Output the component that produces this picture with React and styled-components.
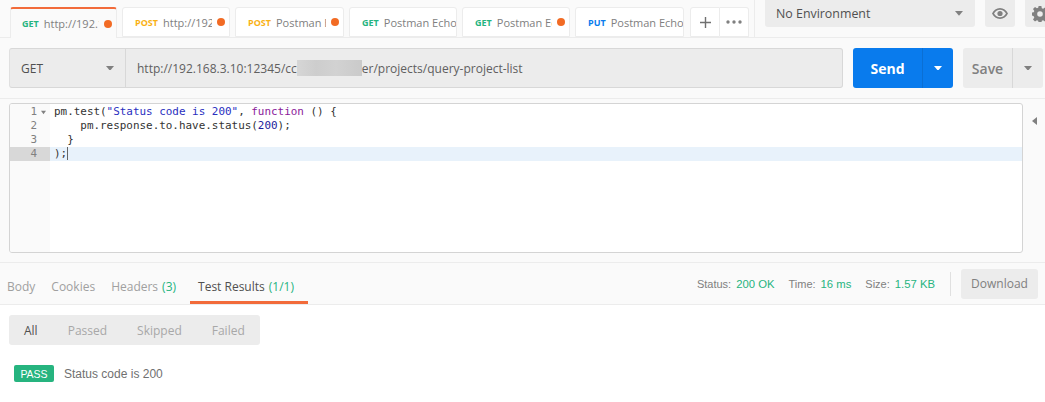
import styled, { createGlobalStyle } from "styled-components";

const Global = createGlobalStyle`
  html, body { margin: 0; padding: 0; background: #fff; }
  body { font-family: "Open Sans", sans-serif; color: #505050; overflow: hidden; }
`;

const Page = styled.div`
  width: 1045px;
  height: 402px;
  display: flex;
  flex-direction: column;
  overflow: hidden;
`;

const TopBar = styled.div`
  height: 37px;
  display: flex;
  background: #fafafa;
  border-bottom: 1px solid #ececec;
  flex: none;
`;

const TabList = styled.div`
  display: flex;
  align-items: flex-end;
  gap: 5px;
  padding-left: 10px;
  width: 755px;
  flex: none;
  box-sizing: border-box;
  border-right: 1px solid #ececec;
  height: 37px;
`;

const Tab = styled.div`
  width: ${({ $w }) => $w || 108}px;
  height: ${({ $active }) => ($active ? 31 : 30)}px;
  margin-bottom: ${({ $active }) => ($active ? -1 : 0)}px;
  box-sizing: border-box;
  background: ${({ $active }) => ($active ? "#fafafa" : "#fff")};
  border: 1px solid #ececec;
  border-top: ${({ $active }) => ($active ? "2px solid #f26b3a" : "1px solid #ececec")};
  border-bottom: ${({ $active }) => ($active ? "none" : "1px solid #ececec")};
  border-radius: 3px 3px 0 0;
  display: flex;
  align-items: center;
  padding: 0 ${({ $dot }) => ($dot ? 4 : 0)}px 0 ${({ $active }) => ($active ? 11 : 12)}px;
  font-size: 11px;
  white-space: nowrap;
  overflow: hidden;
`;

const Method = styled.span`
  font-size: 9px;
  font-weight: 700;
  color: ${({ $color }) => $color};
  margin-right: 5px;
  flex: none;
`;

const TabName = styled.span`
  color: #808080;
  font-size: 11px;
  overflow: hidden;
  flex: 1;
  min-width: 0;
`;

const Dot = styled.span`
  width: 8px;
  height: 8px;
  border-radius: 50%;
  background: #f26b24;
  flex: none;
  margin-left: 5px;
`;

const TabAction = styled.div`
  width: ${({ $w }) => $w}px;
  height: 30px;
  box-sizing: border-box;
  background: #fff;
  border: 1px solid #ececec;
  border-left: ${({ $joined }) => ($joined ? "none" : "1px solid #ececec")};
  border-radius: ${({ $joined }) => ($joined ? "0 3px 0 0" : "3px 0 0 0")};
  display: flex;
  align-items: center;
  justify-content: center;
  color: #808080;
  margin-left: ${({ $joined }) => ($joined ? -5 : 1)}px;
`;

const EnvArea = styled.div`
  display: flex;
  gap: 10px;
  padding-left: 10px;
  align-items: flex-start;
`;

const EnvSelect = styled.div`
  width: 210px;
  height: 27px;
  background: #ececec;
  border-radius: 0 0 3px 3px;
  display: flex;
  align-items: center;
  justify-content: space-between;
  padding: 0 12px 0 11px;
  box-sizing: border-box;
  font-size: 12.4px;
  color: #505050;
`;

const IconBox = styled.div`
  width: 30px;
  height: 27px;
  background: #ececec;
  border-radius: 0 0 3px 3px;
  display: flex;
  align-items: center;
  justify-content: center;
  color: #808080;
  overflow: hidden;
  flex: none;
`;

const UrlRow = styled.div`
  height: 61px;
  box-sizing: border-box;
  padding: 10px 2px 10px 9px;
  display: flex;
  background: #fafafa;
  border-bottom: 1px solid #ececec;
  flex: none;
`;

const UrlGroup = styled.div`
  width: 834px;
  height: 40px;
  box-sizing: border-box;
  display: flex;
  background: #ececec;
  border: 1px solid #d8d8d8;
  border-left-color: #e0e0e0;
  border-radius: 3px;
`;

const MethodSelect = styled.div`
  width: 116px;
  flex: none;
  box-sizing: border-box;
  border-right: 1px solid #d8d8d8;
  display: flex;
  align-items: center;
  justify-content: space-between;
  padding: 0 11px 0 11px;
  font-size: 12px;
  color: #505050;
`;

const UrlText = styled.div`
  display: flex;
  align-items: center;
  padding-left: 11px;
  font-size: 12px;
  color: #606060;
`;

const Smudge = styled.span`
  display: inline-block;
  width: 65px;
  height: 16px;
  background: linear-gradient(90deg, #d6d6d6, #cdcdcd 30%, #d2d2d2 60%, #cacaca);
`;

const SplitButton = styled.div`
  display: flex;
  height: 40px;
  width: ${({ $w }) => $w}px;
  margin-left: 10px;
  border-radius: 3px;
  overflow: hidden;
  flex: none;
  background: ${({ $primary }) => ($primary ? "#097bed" : "#ececec")};
  color: ${({ $primary }) => ($primary ? "#fff" : "#808080")};
  font-weight: ${({ $primary }) => ($primary ? 700 : 600)};
  font-size: 14px;
`;

const SplitMain = styled.div`
  width: ${({ $w }) => $w}px;
  flex: none;
  display: flex;
  align-items: center;
  justify-content: center;
  box-sizing: border-box;
`;

const SplitArrow = styled.div`
  flex: 1;
  display: flex;
  align-items: center;
  justify-content: center;
  border-left: 1px solid ${({ $line }) => $line};
`;

const EditorRow = styled.div`
  height: 164px;
  flex: none;
  display: flex;
  box-sizing: border-box;
  padding: 4px 0 0 9px;
  background: #fafafa;
  border-bottom: 1px solid #ececec;
`;

const Editor = styled.div`
  width: 1014px;
  height: 150px;
  box-sizing: border-box;
  background: #fff;
  border: 1px solid #d4d4d4;
  border-radius: 3px;
  display: flex;
  overflow: hidden;
  font-family: "DejaVu Sans Mono", monospace;
  font-size: 10.93px;
  line-height: 14px;
  flex: none;
`;

const Gutter = styled.div`
  width: 40px;
  flex: none;
  background: #fafafa;
  color: #808080;
  padding-top: 1px;
`;

const GutterLine = styled.div`
  height: 14px;
  display: flex;
  justify-content: flex-end;
  align-items: center;
  box-sizing: border-box;
  padding-right: ${({ $fold }) => ($fold ? 2 : 13)}px;
  background: ${({ $current }) => ($current ? "#d8d8d8" : "transparent")};
`;

const FoldMark = styled.svg`
  margin-left: 2px;
  flex: none;
`;

const Code = styled.div`
  flex: 1;
  padding-top: 1px;
  color: #333;
`;

const CodeLine = styled.div`
  height: 14px;
  padding-left: 4px;
  white-space: pre;
  background: ${({ $current }) => ($current ? "#e8f2fb" : "transparent")};
`;

const Str = styled.span`color: #2a2fc0;`;
const Kw = styled.span`color: #8a1a9a;`;
const Num = styled.span`color: #1c1c9c;`;

const Caret = styled.span`
  display: inline-block;
  width: 1px;
  height: 13px;
  background: #666;
  vertical-align: top;
`;

const SideToggle = styled.div`
  flex: 1;
  display: flex;
  justify-content: center;
  padding-top: 14px;
`;

const ResponseHeader = styled.div`
  height: 42px;
  flex: none;
  box-sizing: border-box;
  background: #fafafa;
  border-bottom: 1px solid #ececec;
  display: flex;
  align-items: stretch;
  justify-content: space-between;
  padding: 0 7px 0 7px;
`;

const ResponseTabs = styled.div`
  display: flex;
  gap: 16px;
  font-size: 12px;
`;

const ResponseTab = styled.div`
  color: ${({ $active }) => ($active ? "#505050" : "#a0a0a0")};
  display: flex;
  align-items: center;
  box-sizing: border-box;
  height: 41px;
  padding-top: 5px;
  ${({ $active }) => $active && `
    border-bottom: 3px solid #f26b3a;
    padding: 8px 8px 0 8px;
    margin-left: -2px;
    width: 118px;
  `}
`;

const Count = styled.span`
  color: #26b47f;
  margin-left: 4px;
`;

const Stats = styled.div`
  display: flex;
  align-items: center;
  font-family: "Liberation Sans", Arial, sans-serif;
  font-size: 11px;
  color: #808080;
`;

const Stat = styled.span`
  margin-right: ${({ $gap }) => $gap}px;
`;

const StatValue = styled.span`
  color: #26b47f;
  font-size: 11.3px;
  margin-left: 5px;
`;

const Divider = styled.div`
  width: 1px;
  height: 24px;
  background: #e0e0e0;
  margin: 0 10px 0 15px;
`;

const Download = styled.div`
  width: 77px;
  height: 30px;
  background: #ececec;
  border-radius: 3px;
  display: flex;
  align-items: center;
  justify-content: center;
  font-family: "Open Sans", sans-serif;
  font-size: 12px;
  color: #808080;
`;

const Results = styled.div`
  padding: 10px 0 0 9px;
`;

const Filters = styled.div`
  width: 251px;
  height: 30px;
  background: #ececec;
  border-radius: 3px;
  display: flex;
  align-items: center;
  font-size: 12px;
  padding-left: 15px;
  box-sizing: border-box;
  gap: 30px;
`;

const Filter = styled.span`
  color: ${({ $active }) => ($active ? "#505050" : "#a8a8a8")};
`;

const TestRow = styled.div`
  display: flex;
  align-items: center;
  margin: 20px 0 0 5px;
  gap: 10px;
  font-family: "Liberation Sans", Arial, sans-serif;
  font-size: 12px;
  color: #707070;
`;

const Badge = styled.span`
  width: 40px;
  height: 17px;
  background: #26b47f;
  color: #fff;
  border-radius: 2px;
  font-size: 10.5px;
  display: flex;
  align-items: center;
  justify-content: center;
`;

const Arrow = ({ color = "#808080", size = 8 }) => (
  <svg width={size} height={size * 0.6} viewBox="0 0 10 6">
    <path d="M0 0h10L5 6z" fill={color} />
  </svg>
);

const methodColors = { GET: "#26b47f", POST: "#f9b115", PUT: "#097bed" };

const tabs = [
  { method: "GET", name: "http://192.168.3.10", dot: true, active: true, w: 107 },
  { method: "POST", name: "http://192.168", dot: true },
  { method: "POST", name: "Postman Echo", dot: true, w: 109 },
  { method: "GET", name: "Postman Echo" },
  { method: "GET", name: "Postman Echo", dot: true },
  { method: "PUT", name: "Postman Echo", w: 109 },
];

export default function App() {
  return (
    <Page>
      <Global />
      <TopBar>
        <TabList>
          {tabs.map((t, i) => (
            <Tab key={i} $active={t.active} $w={t.w} $dot={t.dot}>
              <Method $color={methodColors[t.method]}>{t.method}</Method>
              <TabName>{t.name}</TabName>
              {t.dot && <Dot />}
            </Tab>
          ))}
          <TabAction $w={30}>
            <svg width="13" height="13" viewBox="0 0 13 13">
              <path d="M6.5 1v11M1 6.5h11" stroke="#707070" strokeWidth="1.4" />
            </svg>
          </TabAction>
          <TabAction $w={29} $joined>
            <svg width="16" height="4" viewBox="0 0 16 4" fill="#808080">
              <circle cx="2" cy="2" r="1.7" />
              <circle cx="8" cy="2" r="1.7" />
              <circle cx="14" cy="2" r="1.7" />
            </svg>
          </TabAction>
        </TabList>
        <EnvArea>
          <EnvSelect>
            No Environment
            <Arrow />
          </EnvSelect>
          <IconBox>
            <svg width="16" height="11" viewBox="0 0 16 11">
              <path d="M8 0C4.5 0 1.6 2.2 0 5.5 1.6 8.8 4.5 11 8 11s6.4-2.2 8-5.5C14.4 2.2 11.500 0 8 0zm0 9.300c-2.600 0-4.700-1.500-6-3.800C3.300 3.200 5.400 1.700 8 1.700s4.700 1.500 6 3.800c-1.300 2.300-3.400 3.800-6 3.800z" fill="#808080" />
              <circle cx="8" cy="5.500" r="2.600" fill="#808080" />
            </svg>
          </IconBox>
          <IconBox>
            <svg width="16" height="16" viewBox="0 0 16 16">
              <path d="M6.600 0h2.800l.4 2.200 1.300.6 1.900-1.300 2 2-1.300 1.900.6 1.300 2.200.4v2.800l-2.200.4-.6 1.300 1.300 1.900-2 2-1.900-1.300-1.300.6-.4 2.200H6.600l-.4-2.200-1.300-.6-1.900 1.300-2-2 1.300-1.900-.6-1.300L-.5 9.400V6.600l2.200-.4.6-1.300L1 3l2-2 1.900 1.300 1.300-.6zM8 5.200a2.800 2.800 0 1 0 0 5.600 2.800 2.800 0 0 0 0-5.600z" fill="#808080" fillRule="evenodd" />
            </svg>
          </IconBox>
        </EnvArea>
      </TopBar>

      <UrlRow>
        <UrlGroup>
          <MethodSelect>
            GET
            <Arrow />
          </MethodSelect>
          <UrlText>
            http://192.168.3.10:12345/cc
            <Smudge />
            er/projects/query-project-list
          </UrlText>
        </UrlGroup>
        <SplitButton $primary $w={100}>
          <SplitMain $w={69}>Send</SplitMain>
          <SplitArrow $line="#0a6fd4">
            <Arrow color="#fff" />
          </SplitArrow>
        </SplitButton>
        <SplitButton $w={80}>
          <SplitMain $w={49}>Save</SplitMain>
          <SplitArrow $line="#d8d8d8">
            <Arrow />
          </SplitArrow>
        </SplitButton>
      </UrlRow>

      <EditorRow>
        <Editor>
          <Gutter>
            <GutterLine $fold>
              1
              <FoldMark width="9" height="5" viewBox="0 0 10 6">
                <path d="M2 1h6L5 5z" fill="#808080" />
              </FoldMark>
            </GutterLine>
            <GutterLine>2</GutterLine>
            <GutterLine>3</GutterLine>
            <GutterLine $current>4</GutterLine>
          </Gutter>
          <Code>
            <CodeLine>
              pm.test(<Str>"Status code is 200"</Str>, <Kw>function</Kw> () {"{"}
            </CodeLine>
            <CodeLine>
              {"    "}pm.response.to.have.status(<Num>200</Num>);
            </CodeLine>
            <CodeLine>{"  }"}</CodeLine>
            <CodeLine $current>
              );
              <Caret />
            </CodeLine>
          </Code>
        </Editor>
        <SideToggle>
          <svg width="5" height="8" viewBox="0 0 5 8">
            <path d="M5 0v8L0 4z" fill="#808080" />
          </svg>
        </SideToggle>
      </EditorRow>

      <ResponseHeader>
        <ResponseTabs>
          <ResponseTab>Body</ResponseTab>
          <ResponseTab>Cookies</ResponseTab>
          <ResponseTab>
            Headers<Count>(3)</Count>
          </ResponseTab>
          <ResponseTab $active>
            Test Results<Count>(1/1)</Count>
          </ResponseTab>
        </ResponseTabs>
        <Stats>
          <Stat $gap={14}>
            Status:<StatValue>200 OK</StatValue>
          </Stat>
          <Stat $gap={14}>
            Time:<StatValue>16 ms</StatValue>
          </Stat>
          <Stat $gap={0}>
            Size:<StatValue>1.57 KB</StatValue>
          </Stat>
          <Divider />
          <Download>Download</Download>
        </Stats>
      </ResponseHeader>

      <Results>
        <Filters>
          <Filter $active>All</Filter>
          <Filter>Passed</Filter>
          <Filter>Skipped</Filter>
          <Filter>Failed</Filter>
        </Filters>
        <TestRow>
          <Badge>PASS</Badge>
          Status code is 200
        </TestRow>
      </Results>
    </Page>
  );
}
